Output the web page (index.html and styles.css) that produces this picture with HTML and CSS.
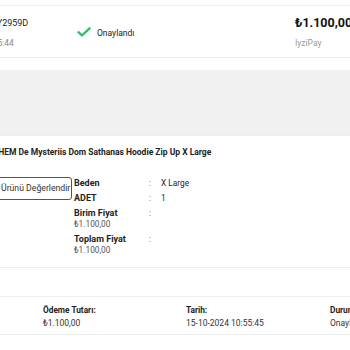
FILE: index.html
```html
<!DOCTYPE html>
<html lang="tr">
<head>
    <meta charset="UTF-8">
    <meta name="viewport" content="width=device-width, initial-scale=1.0">
    <title>Sipariş Detayı</title>
    <link rel="stylesheet" href="styles.css">
</head>
<body>
    <div class="page">
        <div class="order-head">
            <div class="order-id">
                <div class="order-no">Sipariş No: 671Y2959D</div>
                <div class="order-date">15-10-2024 10:55:44</div>
            </div>
            <div class="order-status">
                <svg class="check" viewBox="0 0 14 10" width="14" height="10">
                    <path d="M1.5 5.2 L5 8.5 L12.5 1.3" fill="none" stroke="#2fbf6b" stroke-width="2.4" stroke-linecap="round" stroke-linejoin="round"/>
                </svg>
                <span>Onaylandı</span>
            </div>
            <div class="order-total">
                <div class="total-price">₺1.100,00</div>
                <div class="total-method">IyziPay</div>
            </div>
        </div>

        <div class="banner"></div>

        <div class="product">
            <div class="product-title">ANATHEM De Mysteriis Dom Sathanas Hoodie Zip Up X Large</div>
            <div class="product-body">
                <div class="product-action">
                    <button class="review-button">Ürünü Değerlendir</button>
                </div>
                <div class="product-info">
                    <div class="info-row">
                        <div class="info-label">Beden</div>
                        <div class="info-sep">:</div>
                        <div class="info-value">X Large</div>
                    </div>
                    <div class="info-row">
                        <div class="info-label">ADET</div>
                        <div class="info-sep">:</div>
                        <div class="info-value">1</div>
                    </div>
                    <div class="info-row">
                        <div class="info-label">Birim Fiyat<span class="info-price">₺1.100,00</span></div>
                        <div class="info-sep">:</div>
                        <div class="info-value"></div>
                    </div>
                    <div class="info-row">
                        <div class="info-label">Toplam Fiyat<span class="info-price">₺1.100,00</span></div>
                        <div class="info-sep">:</div>
                        <div class="info-value"></div>
                    </div>
                </div>
            </div>
        </div>

        <div class="summary-gap"></div>

        <div class="summary">
            <div class="summary-item item-amount">
                <div class="summary-label">Ödeme Tutarı:</div>
                <div class="summary-value">₺1.100,00</div>
            </div>
            <div class="summary-item item-date">
                <div class="summary-label">Tarih:</div>
                <div class="summary-value">15-10-2024 10:55:45</div>
            </div>
            <div class="summary-item item-status">
                <div class="summary-label">Durum:</div>
                <div class="summary-value">Onaylandı</div>
            </div>
        </div>
    </div>
</body>
</html>
```

FILE: styles.css
```css
* {
    margin: 0;
    padding: 0;
    box-sizing: border-box;
}

body {
    font-family: Roboto, 'Noto Sans', sans-serif;
    background: #fff;
    color: #222;
    overflow: hidden;
    width: 350px;
    height: 350px;
}

.page {
    padding-top: 5px;
    white-space: nowrap;
}

/* order header */
.order-head {
    display: flex;
    height: 53px;
    border-top: 1px solid #eeeeee;
    border-bottom: 1px solid #eeeeee;
}

.order-id {
    width: 141px;
    margin-left: -64px;
    padding-top: 12px;
    flex-shrink: 0;
}

.order-no {
    font-size: 9px;
    color: #222;
}

.order-date {
    font-size: 8.5px;
    color: #888;
    margin-top: 10px;
}

.order-status {
    display: flex;
    align-items: center;
    gap: 6px;
    width: 218px;
    padding-top: 2px;
    font-size: 8.5px;
    color: #222;
    flex-shrink: 0;
}

.check {
    margin-top: -2px;
}

.order-total {
    padding-top: 9px;
}

.total-price {
    font-size: 12.5px;
    font-weight: 700;
    color: #111;
}

.total-method {
    font-size: 8.5px;
    color: #999;
    margin-top: 8px;
}

/* gray banner */
.banner {
    height: 65px;
    margin-top: 12px;
    background: #f1f1f1;
}

/* product */
.product {
    border-top: 1px solid #eeeeee;
    height: 133px;
    border-bottom: 1px solid #eeeeee;
}

.product-title {
    font-size: 8.5px;
    font-weight: 700;
    color: #222;
    margin-left: -24px;
    padding-top: 11px;
}

.product-body {
    display: flex;
    margin-top: 19px;
}

.product-action {
    width: 74px;
    flex-shrink: 0;
}

.review-button {
    font-family: Roboto, 'Noto Sans', sans-serif;
    font-size: 8.7px;
    color: #333;
    background: #fff;
    border: 1px solid #555;
    border-radius: 3px;
    height: 23px;
    width: 92px;
    margin-left: -20px;
    padding-left: 20px;
    text-align: left;
}

.product-info {
    display: flex;
    flex-direction: column;
    font-size: 8.3px;
    margin-top: 2px;
}

.info-row {
    display: flex;
    margin-bottom: 4px;
}

.info-label {
    width: 75px;
    font-size: 9px;
    font-weight: 700;
    color: #222;
    line-height: 11px;
}

.info-price {
    display: block;
    font-size: 8.3px;
    font-weight: 400;
    color: #555;
}

.info-sep {
    width: 12px;
    color: #666;
    line-height: 11px;
}

.info-value {
    color: #222;
    line-height: 11px;
}

/* summary */
.summary-gap {
    height: 29px;
    border-bottom: 1px solid #eeeeee;
}

.summary {
    display: flex;
    height: 38px;
    padding-top: 8px;
    border-bottom: 1px solid #eeeeee;
}

.summary-item {
    flex-shrink: 0;
}

.item-amount {
    margin-left: 43px;
    width: 143px;
}

.item-date {
    width: 144px;
}

.summary-label {
    font-size: 8.3px;
    font-weight: 700;
    color: #222;
}

.summary-value {
    font-size: 8.5px;
    color: #333;
    margin-top: 3px;
}
```
